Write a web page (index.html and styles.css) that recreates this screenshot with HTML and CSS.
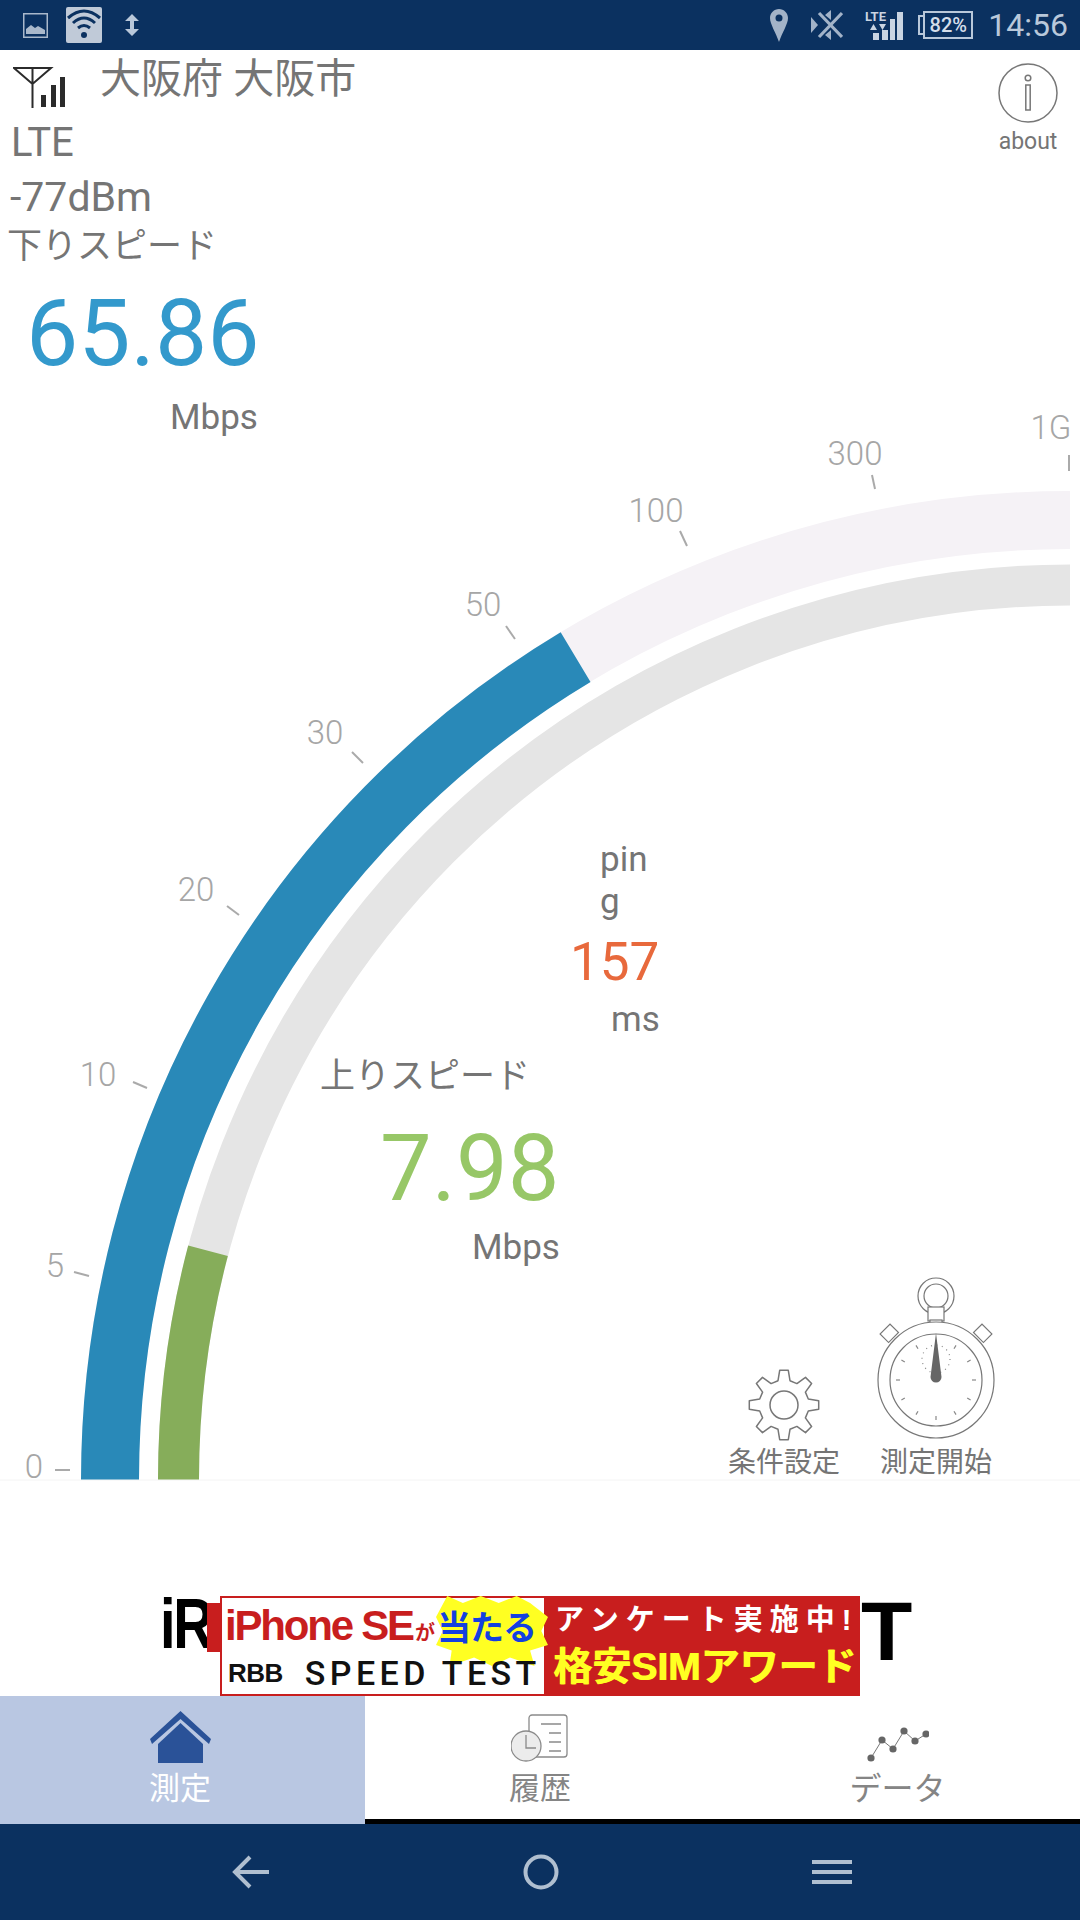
FILE: index.html
```html
<!DOCTYPE html>
<html lang="ja">
<head>
    <meta charset="UTF-8">
    <meta name="viewport" content="width=device-width, initial-scale=1.0">
    <title>RBB SPEED TEST</title>
    <link rel="stylesheet" href="styles.css">
</head>
<body>
    <div class="status-bar">
        <svg class="icon-photo" width="25" height="25" viewBox="0 0 25 25">
            <rect x="0.75" y="0.75" width="23.5" height="23.5" fill="none" stroke="#a9b8cb" stroke-width="1.5"/>
            <path d="M3 21 V16 L8 12 L12 15 L15 13 L22 17 V21 Z" fill="#a9b8cb"/>
        </svg>
        <div class="wifi-box">
            <svg width="36" height="36" viewBox="0 0 36 36" fill="none" stroke="#0b3160" stroke-width="3">
                <path d="M2 11 Q18 -3 34 11"/>
                <path d="M7 16 Q18 6 29 16"/>
                <path d="M12 21 Q18 16 24 21"/>
                <circle cx="18" cy="28" r="3" fill="#0b3160" stroke="none"/>
            </svg>
        </div>
        <svg class="icon-arrows" width="16" height="22" viewBox="0 0 16 22">
            <path d="M8 0 L15 7 H10 V15 H15 L8 22 L1 15 H6 V7 H1 Z" fill="#b9c8da"/>
        </svg>
        <div class="status-right">
            <svg width="18" height="33" viewBox="0 0 18 33">
                <path d="M9 0 C14 0 18 4 18 9 C18 15 12 24 9 33 C6 24 0 15 0 9 C0 4 4 0 9 0 Z" fill="#a3b3c8"/>
                <circle cx="9" cy="9" r="3.5" fill="#0b3160"/>
            </svg>
            <svg width="32" height="30" viewBox="0 0 32 30">
                <path d="M0 7 L7 15 L0 23 Z M20 0 V10 L14 5 Z M20 30 V20 L14 25 Z" fill="#a3b3c8"/>
                <path d="M8 3 L31 27 M31 3 L8 27" stroke="#a3b3c8" stroke-width="3.2"/>
            </svg>
            <svg width="38" height="30" viewBox="0 0 38 30">
                <text x="0" y="11" class="lte-mini">LTE</text>
                <path d="M5 20 L8.5 14 L12 20 Z M14 14 L21 14 L17.5 20 Z" fill="#c9d4e2"/>
                <path d="M8 23 H14 V30 H8 Z M17 20 H23 V30 H17 Z M25 9 H30 V30 H25 Z M32 2 H38 V30 H32 Z" fill="#c9d4e2"/>
            </svg>
            <div class="battery">
                <span class="battery-cap"></span>
                <span class="battery-body">82%</span>
            </div>
            <span class="clock">14:56</span>
        </div>
    </div>

    <div class="main">
        <svg class="gauge" viewBox="0 50 1080 1546" width="1080" height="1546">
            <g fill="none">
                <path d="M110 1480 A960 960 0 0 1 1070 520" stroke="#f5f2f6" stroke-width="58"/>
                <path d="M110 1480 A960 960 0 0 1 575.6 657.1" stroke="#2989b8" stroke-width="58"/>
                <path d="M178.5 1480 A891.5 895 0 0 1 1070 585" stroke="#e5e5e5" stroke-width="41"/>
                <path d="M178.5 1480 A891.5 895 0 0 1 208 1250.7" stroke="#86ad5a" stroke-width="41"/>
            </g>
            <line class="base-line" x1="0" y1="1480" x2="1080" y2="1480"/>
            <g class="ticks">
                <line x1="55" y1="1470" x2="70" y2="1470"/>
                <line x1="74" y1="1272" x2="89" y2="1276"/>
                <line x1="133" y1="1082" x2="147" y2="1088"/>
                <line x1="227" y1="906" x2="239" y2="915"/>
                <line x1="352" y1="752" x2="363" y2="763"/>
                <line x1="506" y1="626" x2="515" y2="639"/>
                <line x1="680" y1="531" x2="687" y2="546"/>
                <line x1="872" y1="475" x2="875" y2="489"/>
                <line x1="1069" y1="455" x2="1069" y2="471"/>
            </g>
            <g class="tick-labels">
                <text x="34" y="1478">0</text>
                <text x="55" y="1277">5</text>
                <text x="98" y="1086">10</text>
                <text x="196" y="901">20</text>
                <text x="325" y="744">30</text>
                <text x="483" y="616">50</text>
                <text x="656" y="522">100</text>
                <text x="855" y="465">300</text>
                <text x="1051" y="439">1G</text>
            </g>
        </svg>

        <div class="info">
            <div class="location-row">
                <svg class="antenna" width="54" height="42" viewBox="0 0 54 42">
                    <path d="M1 1 H38 L19.5 17 Z M19.5 1 V41" fill="none" stroke="#2b2b2b" stroke-width="2"/>
                    <path d="M28 28 H33 V40 H28 Z M38 18 H43 V40 H38 Z M47 10 H52 V40 H47 Z" fill="#2b2b2b"/>
                </svg>
                <span class="location">大阪府 大阪市</span>
                <div class="about">
                    <svg width="60" height="60" viewBox="0 0 60 60" fill="none" stroke="#777" stroke-width="1.5">
                        <circle cx="30" cy="30" r="29"/>
                        <circle cx="30" cy="15" r="2.8"/>
                        <rect x="27.8" y="22" width="4.4" height="25"/>
                    </svg>
                    <span>about</span>
                </div>
            </div>
            <div class="net-type">LTE</div>
            <div class="net-power">-77dBm</div>
            <div class="speed-title">下りスピード</div>
            <div class="down-value">65.86</div>
            <div class="down-unit">Mbps</div>
        </div>

        <div class="ping">
            <div class="ping-title">pin<br>g</div>
            <div class="ping-value">157</div>
            <div class="ping-unit">ms</div>
        </div>

        <div class="upload">
            <div class="speed-title">上りスピード</div>
            <div class="up-value">7.98</div>
            <div class="up-unit">Mbps</div>
        </div>

        <div class="tools">
            <div class="tool">
                <svg width="72" height="72" viewBox="-36 -36 72 72">
                    <path d="M-6 -24.3 L-4.3 -34.7 L4.3 -34.7 L6 -24.3 L12.9 -21.4 L21.5 -27.6 L27.6 -21.5 L21.4 -12.9 L24.3 -6 L34.7 -4.3 L34.7 4.3 L24.3 6 L21.4 12.9 L27.6 21.5 L21.5 27.6 L12.9 21.4 L6 24.3 L4.3 34.7 L-4.3 34.7 L-6 24.3 L-12.9 21.4 L-21.5 27.6 L-27.6 21.5 L-21.4 12.9 L-24.3 6 L-34.7 4.3 L-34.7 -4.3 L-24.3 -6 L-21.4 -12.9 L-27.6 -21.5 L-21.5 -27.6 L-12.9 -21.4 Z" fill="#fff" stroke="#777" stroke-width="1.5" stroke-linejoin="round"/>
                    <circle r="14" fill="none" stroke="#777" stroke-width="1.5"/>
                </svg>
                <span>条件設定</span>
            </div>
            <div class="tool">
                <svg width="120" height="166" viewBox="-60 -105 120 166" fill="none" stroke="#777" stroke-width="1.2">
                    <circle cx="0" cy="-84" r="18"/>
                    <circle cx="0" cy="-84" r="12"/>
                    <rect x="-8" y="-73" width="16" height="14" fill="#fff"/>
                    <rect x="-6" y="-60" width="12" height="4" fill="#fff"/>
                    <rect x="-7" y="-7" width="14" height="12" fill="#fff" transform="translate(-46 -46) rotate(-45)"/>
                    <rect x="-7" y="-7" width="14" height="12" fill="#fff" transform="translate(46 -46) rotate(45)"/>
                    <circle r="58" fill="#fff"/>
                    <circle r="46"/>
                    <g class="watch-ticks">
                        <line x1="0" y1="-40" x2="0" y2="-36"/>
                        <line x1="20" y1="-34.6" x2="18" y2="-31.2"/>
                        <line x1="34.6" y1="-20" x2="31.2" y2="-18"/>
                        <line x1="40" y1="0" x2="36" y2="0"/>
                        <line x1="34.6" y1="20" x2="31.2" y2="18"/>
                        <line x1="20" y1="34.6" x2="18" y2="31.2"/>
                        <line x1="0" y1="40" x2="0" y2="36"/>
                        <line x1="-20" y1="34.6" x2="-18" y2="31.2"/>
                        <line x1="-34.6" y1="20" x2="-31.2" y2="18"/>
                        <line x1="-40" y1="0" x2="-36" y2="0"/>
                        <line x1="-34.6" y1="-20" x2="-31.2" y2="-18"/>
                        <line x1="-20" y1="-34.6" x2="-18" y2="-31.2"/>
                    </g>
                    <circle cx="0" cy="-21" r="14" stroke-dasharray="1 4.5" stroke="#888"/>
                    <path d="M0 -47 L5.5 -3 A5.5 5.5 0 0 1 -5.5 -3 Z" fill="#666" stroke="none"/>
                </svg>
                <span>測定開始</span>
            </div>
        </div>
    </div>

    <div class="ad">
        <span class="ad-left">iR</span>
        <div class="ad-banner">
            <div class="ad-white">
                <div class="ad-burst"></div>
                <div class="ad-line1"><b>iPhone SE</b><small>が</small><em>当たる</em></div>
                <div class="ad-line2"><b>RBB</b><span>SPEED TEST</span></div>
            </div>
            <div class="ad-red">
                <div class="ad-survey">アンケート実施中!</div>
                <div class="ad-award">格安SIMアワード</div>
            </div>
        </div>
        <span class="ad-right">T</span>
    </div>

    <div class="tabs">
        <div class="tab tab-active">
            <svg width="61" height="52" viewBox="0 0 61 52">
                <path d="M30.5 0 L61 28 L59 33 L30.5 8 L2 33 L0 28 Z" fill="#2a5298"/>
                <path d="M30.5 12 L53 33 V52 H8 V33 Z" fill="#2a5298"/>
            </svg>
            <span>測定</span>
        </div>
        <div class="tab">
            <svg width="58" height="50" viewBox="0 0 58 50" fill="none" stroke="#8a8a8a" stroke-width="1.3">
                <rect x="18" y="2" width="38" height="42" rx="3"/>
                <path d="M30 11 H50 M38 20 H50 M38 29 H50 M38 38 H50"/>
                <circle cx="15" cy="33" r="15" fill="#ececec"/>
                <path d="M15 22 V35 H25"/>
            </svg>
            <span>履歴</span>
        </div>
        <div class="tab">
            <svg width="62" height="36" viewBox="0 0 62 36">
                <path d="M4 31 L15 13 L26 22 L37 4 L48 14 L59 7" fill="none" stroke="#777" stroke-width="1"/>
                <g fill="#666">
                    <circle cx="4" cy="31" r="3.6"/>
                    <circle cx="15" cy="13" r="3.6"/>
                    <circle cx="26" cy="22" r="3.6"/>
                    <circle cx="37" cy="4" r="3.6"/>
                    <circle cx="48" cy="14" r="3.6"/>
                    <circle cx="59" cy="7" r="3.6"/>
                </g>
            </svg>
            <span>データ</span>
        </div>
    </div>

    <div class="nav-bar">
        <svg width="38" height="34" viewBox="0 0 38 34" fill="none" stroke="#b0bfd0" stroke-width="4">
            <path d="M18 2 L3 17 L18 32 M3 17 H37"/>
        </svg>
        <svg width="36" height="36" viewBox="0 0 36 36" fill="none" stroke="#b0bfd0" stroke-width="4">
            <circle cx="18" cy="18" r="15.5"/>
        </svg>
        <svg width="40" height="24" viewBox="0 0 40 24" fill="#b0bfd0">
            <path d="M0 0 H40 V4 H0 Z M0 10 H40 V14 H0 Z M0 20 H40 V24 H0 Z"/>
        </svg>
    </div>
</body>
</html>
```

FILE: styles.css
```css
* {
    box-sizing: border-box;
}

body {
    margin: 0;
    width: 1080px;
    height: 1920px;
    overflow: hidden;
    display: flex;
    flex-direction: column;
    background: white;
    color: #757575;
    font-family: Roboto, "Noto Sans CJK JP", sans-serif;
}

/* status bar */
.status-bar {
    height: 50px;
    flex: none;
    display: flex;
    align-items: center;
    padding: 0 12px 0 23px;
    background: #0b3160;
}

.wifi-box {
    width: 36px;
    height: 36px;
    margin-left: 18px;
    border-radius: 2px;
    background: #c0cad8;
}

.icon-arrows {
    margin-left: 22px;
}

.status-right {
    margin-left: auto;
    display: flex;
    align-items: center;
}

.status-right svg:nth-child(2) {
    margin-left: 23px;
}

.status-right svg:nth-child(3) {
    margin-left: 22px;
}

.lte-mini {
    font-family: Roboto, sans-serif;
    font-size: 13px;
    font-weight: 700;
    fill: #c9d4e2;
}

.battery {
    display: flex;
    align-items: center;
    margin-left: 15px;
}

.battery-cap {
    width: 5px;
    height: 20px;
    border: 2px solid #b9c8da;
    border-right: none;
}

.battery-body {
    width: 50px;
    height: 28px;
    border: 2px solid #b9c8da;
    color: #d5deea;
    font-size: 20px;
    font-weight: 500;
    line-height: 24px;
    text-align: center;
}

.clock {
    margin-left: 15px;
    color: #b9c8da;
    font-size: 32px;
}

/* gauge area */
.main {
    position: relative;
    height: 1546px;
    flex: none;
}

.gauge {
    position: absolute;
    top: 0;
    left: 0;
}

.base-line {
    stroke: #f4f4f4;
    stroke-width: 1;
}

.ticks line {
    stroke: #aaa;
    stroke-width: 2;
}

.tick-labels text {
    font-family: Roboto, sans-serif;
    font-size: 33px;
    font-weight: 300;
    fill: #a6a6a6;
    text-anchor: middle;
}

.info {
    position: relative;
    padding: 5px 16px 0 7px;
}

.location-row {
    display: flex;
    align-items: flex-start;
    height: 60px;
}

.antenna {
    margin: 12px 0 0 6px;
}

.location {
    margin-left: 33px;
    font-size: 41px;
    line-height: 48px;
}

.about {
    margin-left: auto;
    margin-top: 8px;
    width: 72px;
    display: flex;
    flex-direction: column;
    align-items: center;
    font-size: 23px;
    line-height: 38px;
}

.net-type {
    margin-left: 4px;
    font-size: 40px;
    line-height: 55px;
}

.net-power {
    margin-left: 3px;
    font-size: 41px;
    line-height: 55px;
}

.speed-title {
    font-size: 35px;
    line-height: 44px;
}

.down-value {
    margin-top: 5px;
    margin-left: 19px;
    color: #3399cc;
    font-size: 93px;
    line-height: 120px;
}

.down-unit {
    margin-top: 2px;
    margin-left: 163px;
    font-size: 35px;
    line-height: 44px;
}

.ping {
    position: absolute;
    top: 789px;
    left: 600px;
    width: 70px;
}

.ping-title {
    font-size: 35px;
    line-height: 42px;
}

.ping-value {
    margin-top: 4px;
    margin-left: -30px;
    color: #e8693c;
    font-size: 53px;
    line-height: 70px;
}

.ping-unit {
    margin-left: 11px;
    font-size: 35px;
    line-height: 46px;
}

.upload {
    position: absolute;
    top: 1005px;
    left: 320px;
    width: 260px;
}

.up-value {
    margin-top: 14px;
    margin-left: 60px;
    color: #97c767;
    font-size: 92px;
    line-height: 112px;
}

.up-unit {
    margin-top: 1px;
    margin-left: 152px;
    font-size: 35px;
    line-height: 44px;
}

.tools {
    position: absolute;
    top: 1224px;
    left: 728px;
    height: 206px;
    display: flex;
    align-items: flex-end;
    gap: 36px;
}

.tool {
    display: flex;
    flex-direction: column;
    align-items: center;
    gap: 5px;
    font-size: 28px;
    line-height: 34px;
}

.watch-ticks line {
    stroke: #888;
}

/* ad banner */
.ad {
    position: relative;
    height: 100px;
    flex: none;
    display: flex;
    justify-content: center;
    color: black;
    font-family: "Liberation Sans", "Noto Sans CJK JP", sans-serif;
    font-weight: 700;
}

.ad-left {
    position: absolute;
    top: -12px;
    left: 160px;
    font-size: 70px;
    letter-spacing: -3px;
    transform: scaleX(0.8);
    transform-origin: left top;
}

.ad-right {
    position: absolute;
    top: -13px;
    left: 861px;
    font-size: 84px;
}

.ad-banner {
    position: relative;
    width: 640px;
    height: 100px;
    display: flex;
}

.ad-banner::before {
    content: "";
    position: absolute;
    top: 7px;
    left: -13px;
    width: 13px;
    height: 49px;
    background: #c81e1e;
}

.ad-white {
    position: relative;
    width: 326px;
    border: 2px solid #c81e1e;
    background: white;
}

.ad-burst {
    position: absolute;
    top: -2px;
    left: 214px;
    width: 112px;
    height: 70px;
    background: #ffff22;
    clip-path: polygon(10% 0, 24% 10%, 40% 0, 56% 10%, 72% 0, 84% 10%, 100% 30%, 94% 50%, 100% 70%, 84% 78%, 88% 100%, 66% 88%, 50% 100%, 34% 88%, 12% 100%, 14% 78%, 0 70%, 6% 50%, 0 30%);
}

.ad-line1 {
    position: relative;
    display: flex;
    align-items: baseline;
    height: 60px;
    padding-left: 3px;
    color: #c81e1e;
    line-height: 56px;
}

.ad-line1 b {
    font-size: 42px;
    letter-spacing: -2.2px;
    white-space: nowrap;
}

.ad-line1 small {
    font-size: 20px;
    margin-left: 2px;
}

.ad-line1 em {
    margin-left: 2px;
    color: #1440e0;
    font-size: 34px;
    font-style: normal;
    letter-spacing: -1px;
    white-space: nowrap;
}

.ad-line2 {
    position: relative;
    display: flex;
    align-items: center;
    height: 30px;
    padding-left: 6px;
    color: #111;
}

.ad-line2 b {
    font-size: 26px;
    letter-spacing: -0.5px;
}

.ad-line2 span {
    margin-left: 22px;
    font-family: Roboto, sans-serif;
    font-size: 34px;
    font-weight: 500;
    letter-spacing: 4.4px;
    white-space: nowrap;
}

.ad-red {
    flex: 1;
    background: #c81e1e;
    padding: 5px 0 0 9px;
    white-space: nowrap;
}

.ad-survey {
    color: white;
    font-size: 29px;
    letter-spacing: 7px;
    line-height: 38px;
}

.ad-award {
    margin-top: 2px;
    margin-left: -2px;
    color: #ffff22;
    font-size: 39px;
    line-height: 52px;
    text-shadow: 1px 0 #ffff22;
}

/* bottom tabs */
.tabs {
    height: 128px;
    flex: none;
    display: grid;
    grid-template-columns: 365px 350px 365px;
}

.tab {
    display: flex;
    flex-direction: column;
    align-items: center;
    justify-content: flex-end;
    gap: 4px;
    padding-bottom: 10px;
    border-bottom: 5px solid black;
    color: #858585;
    font-size: 31px;
    line-height: 40px;
}

.tab:last-child {
    font-size: 32px;
}

.tab svg {
    margin-bottom: 2px;
}

.tab-active {
    padding-right: 5px;
    padding-bottom: 15px;
    border-bottom: none;
    background: #b9c7e2;
    color: white;
}

.nav-bar {
    flex: 1;
    display: flex;
    align-items: center;
    justify-content: center;
    gap: 253px;
    padding-left: 4px;
    background: #0b3160;
}
```
